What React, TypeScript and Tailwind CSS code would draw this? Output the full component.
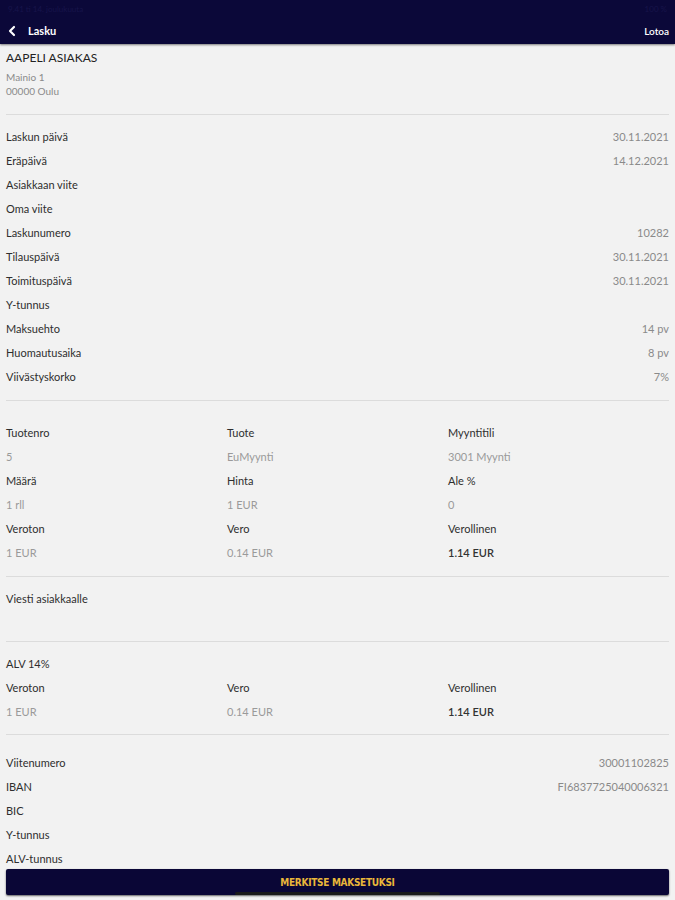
import { ChevronLeft } from "lucide-react";

const PERUSTIEDOT = [
  { label: "Laskun päivä", value: "30.11.2021" },
  { label: "Eräpäivä", value: "14.12.2021" },
  { label: "Asiakkaan viite", value: "" },
  { label: "Oma viite", value: "" },
  { label: "Laskunumero", value: "10282" },
  { label: "Tilauspäivä", value: "30.11.2021" },
  { label: "Toimituspäivä", value: "30.11.2021" },
  { label: "Y-tunnus", value: "" },
  { label: "Maksuehto", value: "14 pv" },
  { label: "Huomautusaika", value: "8 pv" },
  { label: "Viivästyskorko", value: "7%" },
];

const MAKSUTIEDOT = [
  { label: "Viitenumero", value: "30001102825" },
  { label: "IBAN", value: "FI6837725040006321" },
  { label: "BIC", value: "" },
  { label: "Y-tunnus", value: "" },
  { label: "ALV-tunnus", value: "" },
];

const RIVI = [
  ["Tuotenro", "Tuote", "Myyntitili"],
  ["5", "EuMyynti", "3001 Myynti"],
  ["Määrä", "Hinta", "Ale %"],
  ["1 rll", "1 EUR", "0"],
  ["Veroton", "Vero", "Verollinen"],
  ["1 EUR", "0.14 EUR", "1.14 EUR"],
];

function Divider() {
  return <div className="mx-[6px] h-px bg-[#dcdcdc]" />;
}

function InfoRow({ label, value }: { label: string; value: string }) {
  return (
    <div className="flex h-[24px] items-center justify-between px-[6px]">
      <span className="text-[#2e2e2e]">{label}</span>
      <span className="text-[#8a8a8a]">{value}</span>
    </div>
  );
}

// muted = arvorivi, total = viimeinen sarake lihavoituna (verollinen summa)
function Cells({ row, muted, total }: { row: string[]; muted: boolean; total?: boolean }) {
  return (
    <div className="grid h-[24px] grid-cols-3 items-center px-[6px]">
      {row.map((c, i) => (
        <span
          key={i}
          className={
            muted
              ? total && i === 2
                ? "font-semibold text-[#333]"
                : "text-[#9a9a9a]"
              : "text-[#2e2e2e]"
          }
        >
          {c}
        </span>
      ))}
    </div>
  );
}

export default function App() {
  return (
    <div className="relative flex h-[900px] flex-col overflow-hidden bg-[#f2f2f2] font-['Lato',sans-serif] text-[11px]">
      {/* Yläpalkki */}
      <header className="flex h-[44px] flex-col bg-[#0b0839] text-white shadow-[0_1px_2px_rgba(0,0,0,0.5)]">
        <div className="flex h-[18px] items-center justify-between px-[8px] text-[8px] text-[#17144a]">
          <span>9.41 ti 14. joulukuuta</span>
          <span>100 %</span>
        </div>
        <div className="flex h-[26px] items-center justify-between pl-[4px] pr-[6px]">
          <div className="flex items-center gap-[8px]">
            <ChevronLeft size={16} strokeWidth={3.2} />
            <span className="text-[11px] font-bold">Lasku</span>
          </div>
          <span className="text-[10px] font-semibold">Lotoa</span>
        </div>
      </header>

      <div className="flex-1 overflow-hidden">
        {/* Asiakas */}
        <div className="px-[6px] pb-[16px] pt-[6px]">
          <div className="text-[12px] leading-[16px] text-[#222]">AAPELI ASIAKAS</div>
          <div className="mt-[4px] text-[10px] leading-[14px] text-[#8a8a8a]">
            <div>Mainio 1</div>
            <div>00000 Oulu</div>
          </div>
        </div>
        <Divider />

        <div className="pb-[11px] pt-[10px]">
          {PERUSTIEDOT.map((r) => (
            <InfoRow key={r.label} {...r} />
          ))}
        </div>
        <Divider />

        <div className="pb-[11px] pt-[20px]">
          {RIVI.map((r, i) => (
            <Cells key={i} row={r} muted={i % 2 === 1} total={i === 5} />
          ))}
        </div>
        <Divider />

        <div className="pb-[30px] pt-[10px]">
          <div className="flex h-[24px] items-center px-[6px] text-[#2e2e2e]">Viesti asiakkaalle</div>
        </div>
        <Divider />

        <div className="pb-[10px] pt-[10px]">
          <div className="flex h-[24px] items-center px-[6px] text-[#2e2e2e]">ALV 14%</div>
          <Cells row={["Veroton", "Vero", "Verollinen"]} muted={false} />
          <Cells row={["1 EUR", "0.14 EUR", "1.14 EUR"]} muted={true} total />
        </div>
        <Divider />

        <div className="pt-[16px]">
          {MAKSUTIEDOT.map((r) => (
            <InfoRow key={r.label} {...r} />
          ))}
        </div>
      </div>

      {/* Merkitse maksetuksi */}
      <div className="px-[6px] pb-[5px]">
        <button className="flex h-[26px] w-full items-center justify-center rounded-[2px] bg-[#0a0636] font-['DejaVu_Sans_Condensed',sans-serif] text-[10px] font-bold tracking-[-0.3px] text-[#e9b73a] shadow-[0_1px_2px_rgba(0,0,0,0.6)]">
          MERKITSE MAKSETUKSI
        </button>
      </div>
      <div className="absolute bottom-[5px] left-[235px] h-[3px] w-[205px] rounded-full bg-[#1a1a1a]" />
    </div>
  );
}
